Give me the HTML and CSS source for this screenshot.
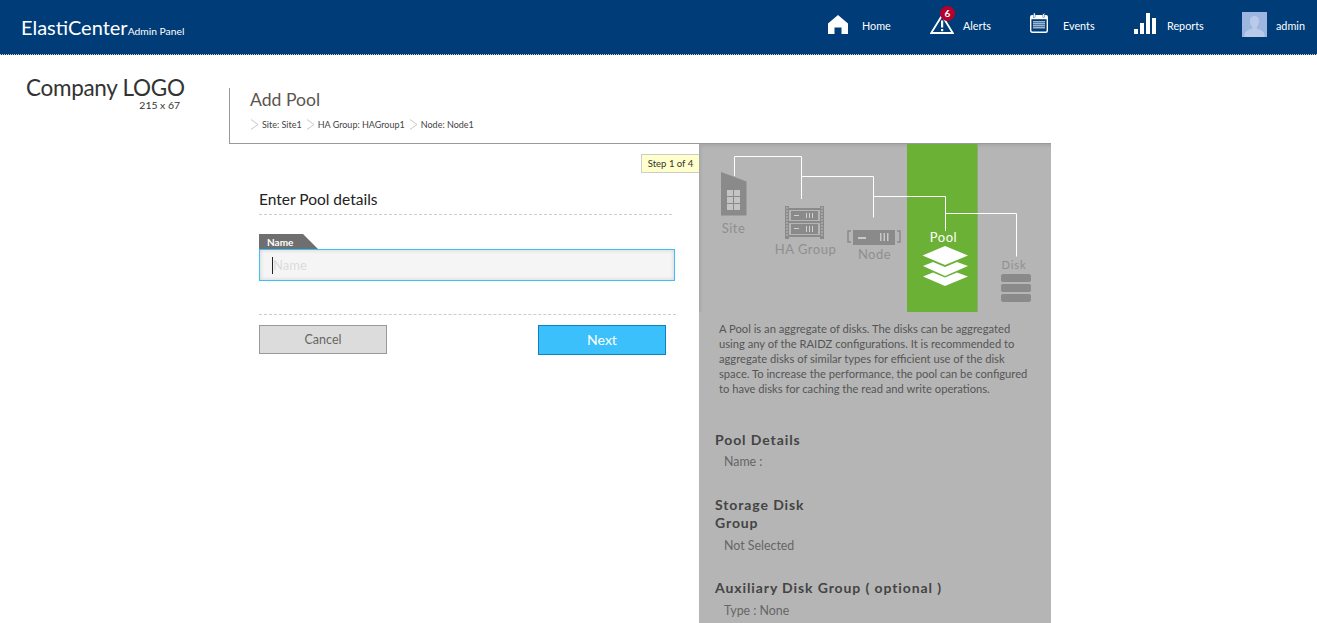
FILE: index.html
```html
<!DOCTYPE html>
<html lang="en">
<head>
<meta charset="utf-8">
<title>ElastiCenter Admin Panel</title>
<link rel="stylesheet" href="styles.css">
</head>
<body>
<header class="topbar">
  <div class="brand"><span class="brand-name">ElastiCenter</span><span class="brand-sub">Admin Panel</span></div>
  <nav class="nav">
    <a class="nav-item">
      <svg class="nav-icon icon-home" viewBox="0 0 20 19"><path d="M10 0 20 8.500V19H13.500V12.500H6.500V19H0V8.500Z" fill="#fff"/></svg>
      <span class="nav-label">Home</span>
    </a>
    <a class="nav-item nav-alert">
      <svg class="nav-icon icon-alert" viewBox="0 0 24 20"><path d="M12 1.500 22.800 19H1.200Z" fill="none" stroke="#fff" stroke-width="1.800"/><rect x="11" y="6.500" width="2.200" height="7" fill="#fff"/><rect x="11" y="15" width="2.200" height="2.200" fill="#fff"/></svg>
      <span class="badge">6</span>
      <span class="nav-label">Alerts</span>
    </a>
    <a class="nav-item">
      <svg class="nav-icon icon-events" viewBox="0 0 18 20"><rect x="0.700" y="2.700" width="16.600" height="16.600" rx="1.500" fill="none" stroke="#fff" stroke-width="1.400"/><rect x="0.700" y="2.700" width="16.600" height="3.500" fill="#fff"/><rect x="3.500" y="0" width="1.600" height="4.500" fill="#fff" stroke="#003c77" stroke-width=".4"/><rect x="12.900" y="0" width="1.600" height="4.500" fill="#fff" stroke="#003c77" stroke-width=".4"/><path d="M3 8.500h12M3 10.500h12M3 12.500h12M3 14.500h12M4 8v8M6 8v8M8 8v8M10 8v8M12 8v8M14 8v8" stroke="#9fb6d0" stroke-width="1"/></svg>
      <span class="nav-label">Events</span>
    </a>
    <a class="nav-item">
      <svg class="nav-icon icon-reports" viewBox="0 0 22 21"><path d="M0 16h4v5H0zM6 10h4v11H6zM12 0h4v21h-4zM18 5h4v16h-4z" fill="#fff"/></svg>
      <span class="nav-label">Reports</span>
    </a>
    <a class="nav-item">
      <svg class="nav-icon icon-avatar" viewBox="0 0 25 25"><rect width="25" height="25" fill="#9db6df"/><path d="M12.500 4c3 0 4.600 2.400 4.600 5.200 0 2.600-1.300 4.700-2.400 5.800v1.600c2.500 1.100 6.800 2 7.800 5.400v3H2.500v-3c1-3.400 5.300-4.300 7.800-5.400V15C9.200 13.900 7.900 11.800 7.900 9.200 7.900 6.400 9.500 4 12.500 4Z" fill="#b9cbe9"/></svg>
      <span class="nav-label">admin</span>
    </a>
  </nav>
</header>

<main class="page">
  <aside class="logo">
    <div class="logo-box">
      <div class="logo-name">Company LOGO</div>
      <div class="logo-size">215 x 67</div>
    </div>
  </aside>

  <section class="content">
    <div class="content-head">
      <h1 class="title">Add Pool</h1>
      <div class="crumbs">
        <svg class="chev" viewBox="0 0 9 11"><path d="M1 .5 8 5.500 1 10.500" fill="none" stroke="#c8c8c8"/></svg><span class="crumb">Site: Site1</span>
        <svg class="chev" viewBox="0 0 9 11"><path d="M1 .5 8 5.500 1 10.500" fill="none" stroke="#c8c8c8"/></svg><span class="crumb">HA Group: HAGroup1</span>
        <svg class="chev" viewBox="0 0 9 11"><path d="M1 .5 8 5.500 1 10.500" fill="none" stroke="#c8c8c8"/></svg><span class="crumb">Node: Node1</span>
      </div>
    </div>

    <div class="split">
      <div class="form-pane">
        <div class="step-row"><span class="step">Step 1 of 4</span></div>
        <form class="form">
          <h2 class="form-title">Enter Pool details</h2>
          <div class="field">
            <div class="tag">Name</div>
            <div class="input-box">
              <span class="caret"></span>
              <span class="placeholder">Name</span>
            </div>
          </div>
          <div class="actions">
            <span class="btn btn-cancel">Cancel</span>
            <span class="btn btn-next">Next</span>
          </div>
        </form>
      </div>

      <div class="info-pane">
        <svg class="diagram" viewBox="699 144 352 168" width="352" height="168">
          <rect x="907" y="144" width="71" height="168" fill="#6ab136"/>
          <rect x="977" y="144" width="1" height="168" fill="#8fa878"/>

          <path d="M721 172 746.500 181.500V215.500H721Z" fill="#8a8a8a"/>
          <path d="M727 190h6v6h-6zM734 190h6v6h-6zM727 197h6v6h-6zM734 197h6v6h-6zM727 204h6v6h-6zM734 204h6v6h-6z" fill="#c4c4c4"/>

          <g fill="#8a8a8a">
            <path d="M785 206h4v33h-4zM820 206h4v33h-4z"/>
            <path d="M789 208h31v2h-31zM789 221h31v2h-31zM789 235h31v2h-31z"/>
            <rect x="791" y="211" width="27" height="9"/>
            <rect x="791" y="224" width="27" height="10"/>
          </g>
          <path d="M786 208h2M786 211h2M786 214h2M786 217h2M786 220h2M786 223h2M786 226h2M786 229h2M786 232h2M786 235h2M821 208h2M821 211h2M821 214h2M821 217h2M821 220h2M821 223h2M821 226h2M821 229h2M821 232h2M821 235h2" stroke="#c0c0c0" stroke-width="1"/>
          <path d="M794 215h5v1h-5zM794 228h5v1h-5zM806 213h1v5h-1zM809 213h1v5h-1zM812 213h1v5h-1zM806 226h1v6h-1zM809 226h1v6h-1zM812 226h1v6h-1z" fill="#d0d0d0"/>

          <rect x="853" y="230" width="42" height="15" fill="#8a8a8a"/>
          <path d="M851 231h-3v11h3M897 231h3v11h-3" fill="none" stroke="#8a8a8a" stroke-width="1.500"/>
          <path d="M858 237h8v2h-8zM880 233h1.500v8H880zM883.500 233h1.500v8h-1.500zM887 233h1.500v8H887z" fill="#c8c8c8"/>

          <path d="M945 246 968 255.500 945 265 922.500 255.500Z" fill="#fff"/>
          <path d="M923 266 933 262 945 267 957 262 968 266 945 276Z" fill="#fff"/>
          <path d="M923 276.500 933 272.500 945 277.500 957 272.500 968 276.500 945 286Z" fill="#fff"/>

          <rect x="1001" y="274" width="30" height="8" rx="2" fill="#8a8a8a"/>
          <rect x="1001" y="284" width="30" height="8" rx="2" fill="#8a8a8a"/>
          <rect x="1001" y="294" width="30" height="8" rx="2" fill="#8a8a8a"/>

          <path d="M734.500 176V156.500H801.500V199M801.500 176.500H873.500V217.500M873.500 196.500H945.500V231M945.500 213.500H1016.500V256.500" fill="none" stroke="#fff" stroke-width="1"/>

          <text class="d-label" x="733.500" y="233" text-anchor="middle">Site</text>
          <text class="d-label" x="805.500" y="254" text-anchor="middle">HA Group</text>
          <text class="d-label" x="874.500" y="259" text-anchor="middle">Node</text>
          <text class="d-label d-pool" x="943.500" y="242" text-anchor="middle">Pool</text>
          <text class="d-label d-disk" x="1014" y="269" text-anchor="middle">Disk</text>
        </svg>

        <p class="desc">A Pool is an aggregate of disks. The disks can be aggregated<br>using any of the RAIDZ configurations. It is recommended to<br>aggregate disks of similar types for efficient use of the disk<br>space. To increase the performance, the pool can be configured<br>to have disks for caching the read and write operations.</p>

        <div class="summary summary-pool">
          <h3 class="sum-title">Pool Details</h3>
          <p class="sum-item">Name :</p>
        </div>
        <div class="summary summary-storage">
          <h3 class="sum-title">Storage Disk<br>Group</h3>
          <p class="sum-item">Not Selected</p>
        </div>
        <div class="summary summary-aux">
          <h3 class="sum-title">Auxiliary Disk Group ( optional )</h3>
          <p class="sum-item">Type : None</p>
        </div>
      </div>
    </div>
  </section>
</main>
</body>
</html>
```

FILE: styles.css
```css
* { box-sizing: border-box; }
html, body { margin: 0; height: 100%; overflow: hidden; }
body { background: #fff; font-family: Lato, "Open Sans", sans-serif; color: #333; }
h1, h2, h3, p { margin: 0; font-weight: normal; }

.topbar {
  height: 55px;
  background: #003c77;
  border-bottom: 1px dotted #c9c9c9;
  display: flex;
  align-items: center;
  justify-content: space-between;
  padding-left: 21px;
}
.brand { display: flex; align-items: baseline; color: #fff; }
.brand-name { font-size: 20px; }
.brand-sub { font-size: 10.300px; }
.nav {
  display: grid;
  grid-template-columns: 102px 100px 104px 108px 75px;
  margin-top: -6px;
}
.nav-item {
  display: flex;
  align-items: center;
  position: relative;
  color: #fff;
  font-size: 10.800px;
  height: 25px;
}
.nav-label { margin-top: 2px; }
.nav-icon { display: block; flex: none; }
.icon-home { width: 20px; height: 19px; margin-right: 14px; }
.icon-alert { width: 24px; height: 20px; margin-right: 9px; }
.icon-events { width: 18px; height: 20px; margin-right: 15px; margin-top: -3px; }
.icon-reports { width: 22px; height: 21px; margin-right: 11px; margin-top: -2px; }
.icon-avatar { width: 25px; height: 25px; margin-right: 9px; }
.badge {
  position: absolute;
  left: 10px;
  top: -6px;
  width: 15px;
  height: 15px;
  border-radius: 50%;
  background: #b5002d;
  color: #fff;
  font-size: 10px;
  font-weight: bold;
  line-height: 15px;
  text-align: center;
}

.page { display: flex; margin-top: 33px; }
.logo { width: 229px; flex: none; padding-left: 26px; }
.logo-box { width: 158px; }
.logo-name { font-size: 22.500px; letter-spacing: -.3px; line-height: 1; white-space: nowrap; margin-top: -11px; }
.logo-size { font-size: 10.400px; text-align: right; padding-right: 4px; line-height: 12px; margin-top: -1px; }

.content { width: 822px; flex: none; }
.content-head {
  height: 56px;
  border-left: 1px solid #999;
  border-bottom: 1px solid #999;
  padding: 2px 0 0 20px;
}
.title { font-size: 17.600px; line-height: 20px; color: #5c5550; }
.crumbs { display: flex; align-items: center; margin-top: 9px; height: 11px; }
.chev { width: 9px; height: 11px; flex: none; margin-right: 3px; }
.crumb { font-size: 9px; color: #444; margin-right: 4px; white-space: nowrap; }

.split { display: flex; height: 479px; }
.form-pane { width: 470px; flex: none; }
.step-row { display: flex; justify-content: flex-end; padding-top: 10px; height: 29px; }
.step {
  height: 19px;
  width: 58px;
  background: #ffffcc;
  border: 1px solid #ccc;
  border-right: 0;
  font-size: 9.500px;
  line-height: 17px;
  text-align: center;
  color: #333;
}
.form { padding: 16px 0 0 30px; width: 447px; }
.form-title {
  font-size: 15.500px;
  line-height: 20px;
  color: #222;
  width: 413px;
  padding-bottom: 5px;
  border-bottom: 1px dashed #ccc;
  height: 26px;
}
.field { margin-top: 19px; }
.tag {
  width: 59px;
  height: 15px;
  background: #6f6f6f;
  color: #fff;
  font-size: 10px;
  font-weight: bold;
  line-height: 16px;
  padding-left: 8px;
  clip-path: polygon(0 0, 44px 0, 100% 100%, 0 100%);
}
.input-box {
  width: 416px;
  height: 32px;
  display: flex;
  align-items: center;
  position: relative;
  padding-left: 13px;
  background: #f5f5f5;
  border: 1px solid #3cc0fb;
  box-shadow: inset 0 0 4px #d0d0d0;
}
.placeholder { font-size: 13px; color: #dcdcdc; }
.caret {
  position: absolute;
  left: 12px;
  top: 7px;
  width: 1px;
  height: 17px;
  background: #222;
}
.actions {
  display: flex;
  justify-content: space-between;
  align-items: flex-start;
  width: 417px;
  margin-top: 33px;
  padding: 10px 10px 0 0;
  border-top: 1px dashed #ccc;
}
.btn {
  display: block;
  width: 128px;
  text-align: center;
  font-size: 12.500px;
}
.btn-cancel { height: 29px; line-height: 27px; background: #dcdcdc; border: 1px solid #999; color: #666; }
.btn-next { height: 30px; line-height: 28px; background: #3cc0fb; border: 1px solid #0a84c0; color: #fff; font-size: 14px; }

.info-pane { width: 352px; flex: none; background: #b5b5b5; overflow: hidden; }
.diagram { display: block; box-shadow: inset 2px 2px 3px rgba(0,0,0,.08); }
.d-label { font-family: Lato, "Open Sans", sans-serif; font-size: 13px; fill: #8f8f8f; letter-spacing: .5px; }
.d-pool { fill: #fff; }
.d-disk { font-size: 11px; letter-spacing: 1px; }
.desc {
  font-size: 11.200px;
  line-height: 15px;
  color: #555;
  padding: 9px 0 0 20px;
  white-space: nowrap;
}
.summary { padding-left: 16px; }
.summary-pool { margin-top: 35px; }
.summary-storage { margin-top: 26px; }
.summary-aux { margin-top: 25px; }
.sum-title { font-size: 14px; font-weight: bold; line-height: 18px; color: #444; letter-spacing: .9px; }
.sum-item { font-size: 12.400px; line-height: 16px; color: #666; padding: 5px 0 0 9px; }
.summary-storage .sum-item, .summary-aux .sum-item { padding-top: 6px; }
```
